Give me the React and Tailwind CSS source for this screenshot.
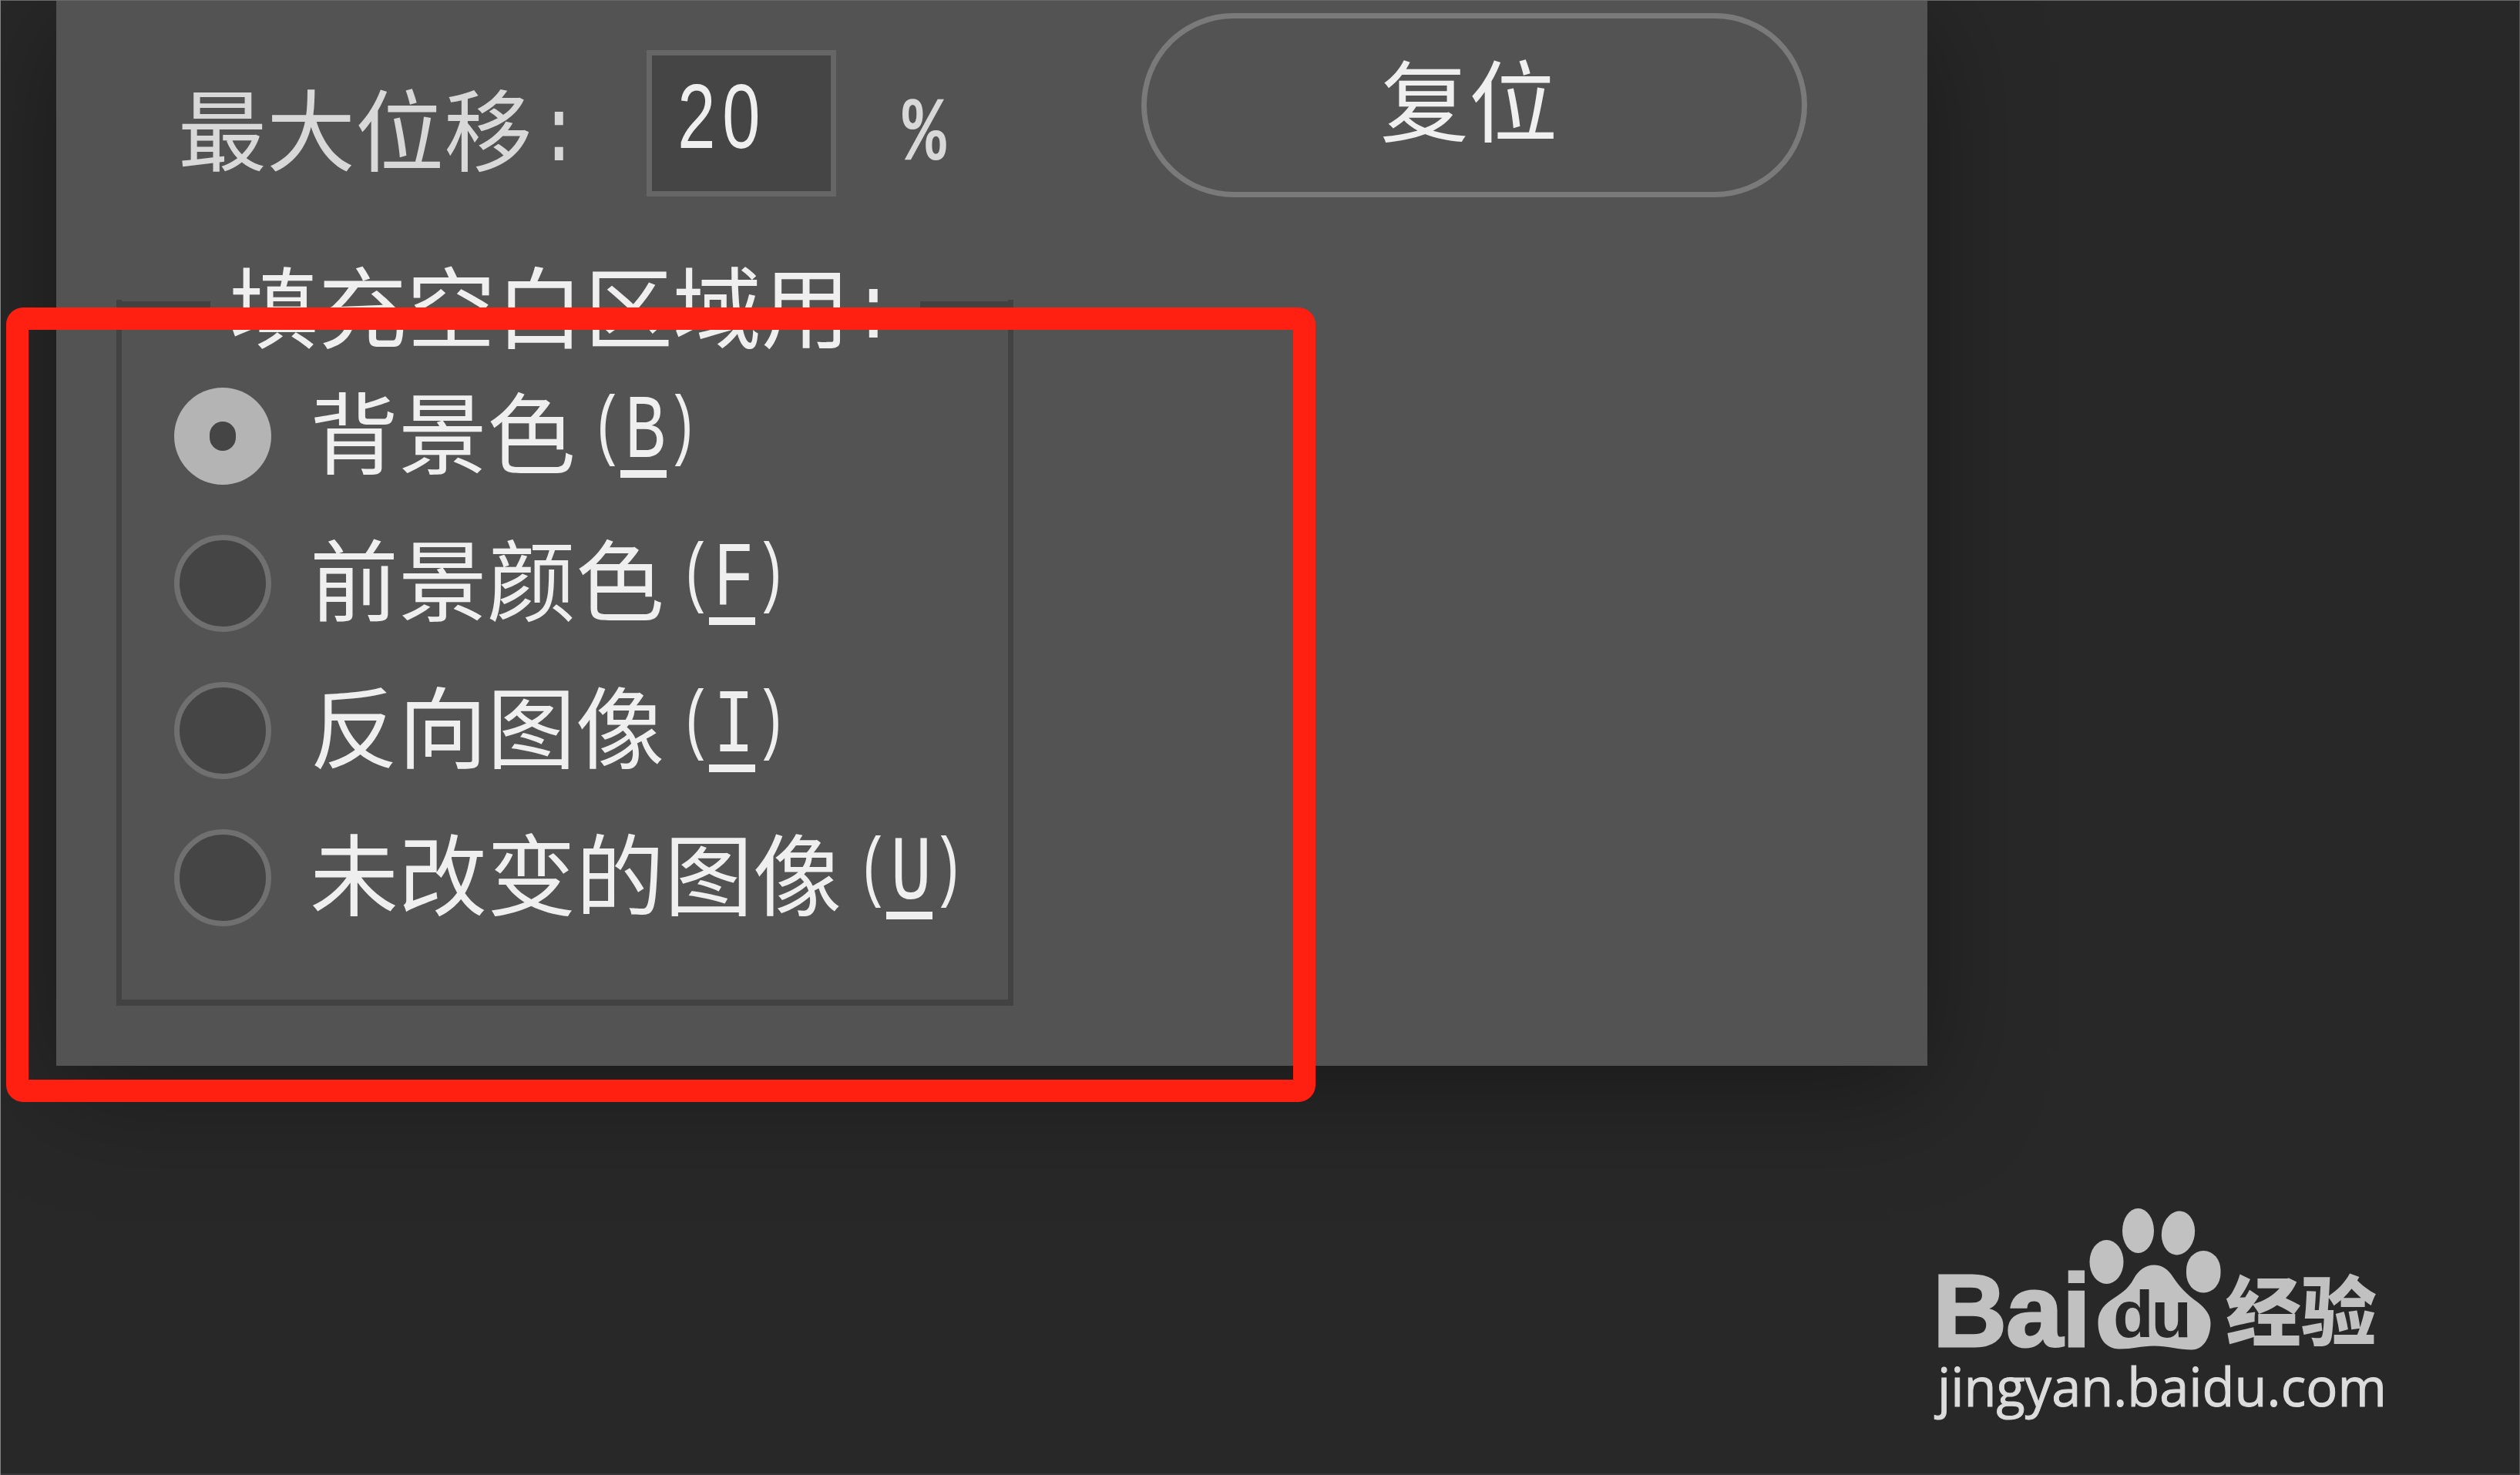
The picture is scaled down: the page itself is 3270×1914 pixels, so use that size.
import React from 'react';

const options = [
  { label: '背景色', hotkey: 'B', checked: true },
  { label: '前景颜色', hotkey: 'F', checked: false },
  { label: '反向图像', hotkey: 'I', checked: false },
  { label: '未改变的图像', hotkey: 'U', checked: false },
];

// half-width character cell
const Half = ({ children, className = 'scale-x-80', underline }) => (
  <span className="relative flex w-[57.6px] justify-center font-['Liberation_Mono',monospace] text-[118px] leading-[118px]">
    <span className={`inline-block ${className}`}>{children}</span>
    {underline && <span className="absolute bottom-[-3px] left-0 h-[10px] w-[60px] bg-[#efefef]"></span>}
  </span>
);

const Digit = ({ children }) => (
  <Half className="scale-x-75 font-['Liberation_Sans',sans-serif]">{children}</Half>
);

const Radio = ({ checked }) => (
  checked ? (
    <span className="flex size-[126px] items-center justify-center rounded-full bg-[#b4b4b4]">
      <span className="h-[38px] w-[34px] rounded-full bg-[#454545]"></span>
    </span>
  ) : (
    <span className="size-[126px] rounded-full border-[7px] border-[#707070] bg-[#454545]"></span>
  )
);

const Watermark = () => (
  <svg className="absolute left-[2490px] top-[1550px]" width="620" height="310" viewBox="2490 1550 620 310">
    <g fill="#c1c1c1">
      <text x="2508" y="1747" fontSize="133" fontWeight="700" fontFamily="Liberation Sans, sans-serif" textLength="205" stroke="#c1c1c1" strokeWidth="3">Bai</text>
      <ellipse cx="2733.5" cy="1637.5" rx="22" ry="28.5" />
      <ellipse cx="2774.5" cy="1597" rx="20.5" ry="29" />
      <ellipse cx="2826.5" cy="1600" rx="21.5" ry="28.5" transform="rotate(8 2826.5 1600)" />
      <rect x="2837" y="1623" width="44.500" height="54.500" rx="22" ry="25" />
      <path d="M2795 1641.500C2784 1641.500 2775 1648 2769 1659C2761 1674 2751 1679 2738 1688C2728 1695 2722.500 1704 2722.500 1716C2722.500 1735 2731 1750 2750 1750.500C2768 1750.500 2778 1746.500 2795 1746.500C2812 1746.500 2828 1751.500 2844 1751.500C2860 1751.500 2868.500 1734 2868.500 1717C2868.500 1706 2862 1698 2852 1690C2838 1680 2828 1670 2819 1656C2813 1647 2806 1641.500 2795 1641.500Z" />
      <text x="2888" y="1738" fontSize="98" fontWeight="900" fontFamily="Noto Sans CJK SC, sans-serif">经验</text>
    </g>
    <text x="2742" y="1735" fontSize="86" fontWeight="700" fill="#282828" fontFamily="Liberation Sans, sans-serif" textLength="102">du</text>
    <text x="2514" y="1825" fontSize="69" fill="#dcdcdc" stroke="#dcdcdc" strokeWidth="1" fontFamily="Open Sans, Noto Sans, sans-serif" textLength="583" lengthAdjust="spacingAndGlyphs">jingyan.baidu.com</text>
  </svg>
);

const App = () => {
  return (
    <div className="relative h-[1914px] w-[3270px] overflow-hidden bg-[#282828] font-['Noto_Sans_CJK_SC',sans-serif] text-[115px] leading-[115px] text-[#efefef]">
      <main className="ml-[73px] h-[1383px] w-[2428px] bg-[#535353] shadow-[0_30px_140px_rgba(0,0,0,0.37)]">
        <div className="flex h-[389px] items-start">
          <label className="ml-[158px] mt-[106px] flex w-[608px] whitespace-nowrap text-[#d8d8d8]">
            最大位移<Half className="translate-x-[6px] translate-y-[12px] scale-x-80">:</Half>
          </label>
          <div className="mt-[65px] flex h-[190px] w-[246px] border-[7px] border-[#666666] bg-[#454545] pl-[29px] pt-[20px]">
            <Digit>2</Digit>
            <Digit>0</Digit>
          </div>
          <span className="ml-[86px] mt-[117px] font-bold text-[#d8d8d8]">
            <Half>%</Half>
          </span>
          <button className="ml-[252px] mt-[17px] h-[239px] w-[864px] rounded-full border-[7px] border-[#7a7a7a] pb-[22px]">
            <span className="-ml-[13px]">复位</span>
          </button>
        </div>

        <fieldset className="ml-[78px] h-[916px] w-[1164px] border-x-[7px] border-b-[8px] border-[#424242]">
          <div className="flex h-[114px] items-start whitespace-nowrap">
            <span className="mt-[2px] h-[8px] w-[115px] bg-[#424242]"></span>
            <span className="-mt-[53px] ml-[25px] flex h-[115px] w-[896px]">
              填充空白区域用<Half className="translate-x-[2px] translate-y-[12px] scale-x-80">:</Half>
            </span>
            <span className="mt-[2px] h-[8px] grow bg-[#424242]"></span>
          </div>
          <div className="flex flex-col gap-[65px] pl-[68px]">
            {options.map((option) => (
              <label key={option.hotkey} className="flex h-[126px] items-center gap-[50px] whitespace-nowrap">
                <Radio checked={option.checked} />
                <span className="-mt-[17px] flex">
                  {option.label}
                  <Half className="translate-x-[13px] scale-x-60 scale-y-85">(</Half>
                  <Half className="translate-x-[4px] translate-y-[4px] scale-x-75" underline>{option.hotkey}</Half>
                  <Half className="-translate-x-[6px] scale-x-60 scale-y-85">)</Half>
                </span>
              </label>
            ))}
          </div>
        </fieldset>
      </main>

      <div className="absolute left-[8px] top-[399px] h-[1031px] w-[1699px] rounded-[22px] border-[29px] border-[#ff2011]"></div>
      <Watermark />
      <div className="absolute inset-x-0 top-0 h-px bg-[#6a6a6a]"></div>
      <div className="absolute inset-x-0 bottom-0 h-[2px] bg-[#39363a]"></div>
      <div className="absolute inset-y-0 left-0 w-px bg-[#858585]"></div>
      <div className="absolute inset-y-0 right-0 w-px bg-[#5a5a5a]"></div>
    </div>
  );
};

export default App;
